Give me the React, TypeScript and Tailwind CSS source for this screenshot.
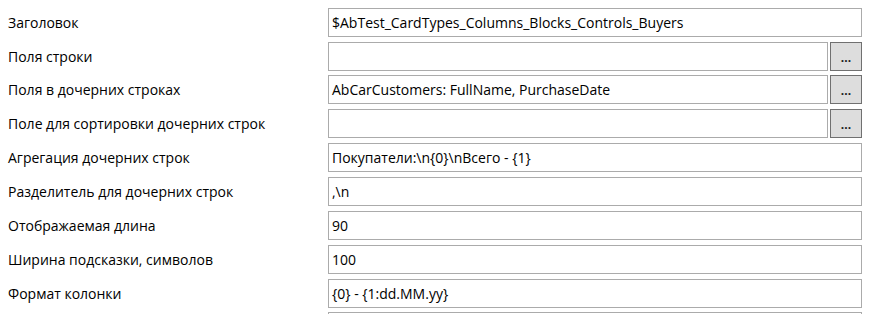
import React from 'react';

interface Field {
  label: string;
  value: string;
  picker?: boolean;
  gap: string;
}

const fields: Field[] = [
  { label: 'Заголовок', value: '$AbTest_CardTypes_Columns_Blocks_Controls_Buyers', gap: 'mt-0' },
  { label: 'Поля строки', value: '', picker: true, gap: 'mt-[5px]' },
  { label: 'Поля в дочерних строках', value: 'AbCarCustomers: FullName, PurchaseDate', picker: true, gap: 'mt-[4px]' },
  { label: 'Поле для сортировки дочерних строк', value: '', picker: true, gap: 'mt-[5px]' },
  { label: 'Агрегация дочерних строк', value: 'Покупатели:\\n{0}\\nВсего - {1}', gap: 'mt-[5px]' },
  { label: 'Разделитель для дочерних строк', value: ',\\n', gap: 'mt-[5px]' },
  { label: 'Отображаемая длина', value: '90', gap: 'mt-[5px]' },
  { label: 'Ширина подсказки, символов', value: '100', gap: 'mt-[5px]' },
  { label: 'Формат колонки', value: '{0} - {1:dd.MM.yy}', gap: 'mt-[5px]' },
  { label: '', value: '', gap: 'mt-[4px]' },
];

const App: React.FC = () => {
  return (
    <div className="w-[871px] h-[314px] overflow-hidden bg-white pl-[8px] pr-[9px] pt-[8px] font-['Segoe_UI','Open_Sans',sans-serif] text-[14px] text-black">
      {fields.map((f, i) => (
        <div key={i} className={`flex items-center h-[29px] ${f.gap}`}>
          <div className="w-[320px] shrink-0 whitespace-nowrap">{f.label}</div>
          <div className="flex-1 h-full border border-[#ababab] bg-white flex items-center px-[3px] whitespace-nowrap overflow-hidden">
            {f.value}
          </div>
          {f.picker && (
            <button className="ml-[2px] w-[32px] h-full shrink-0 bg-[#dddddd] border border-[#707070] flex items-end justify-center pb-[6px] leading-none text-[12px] font-bold text-[#1a1a1a]">
              ...
            </button>
          )}
        </div>
      ))}
    </div>
  );
};

export default App;
